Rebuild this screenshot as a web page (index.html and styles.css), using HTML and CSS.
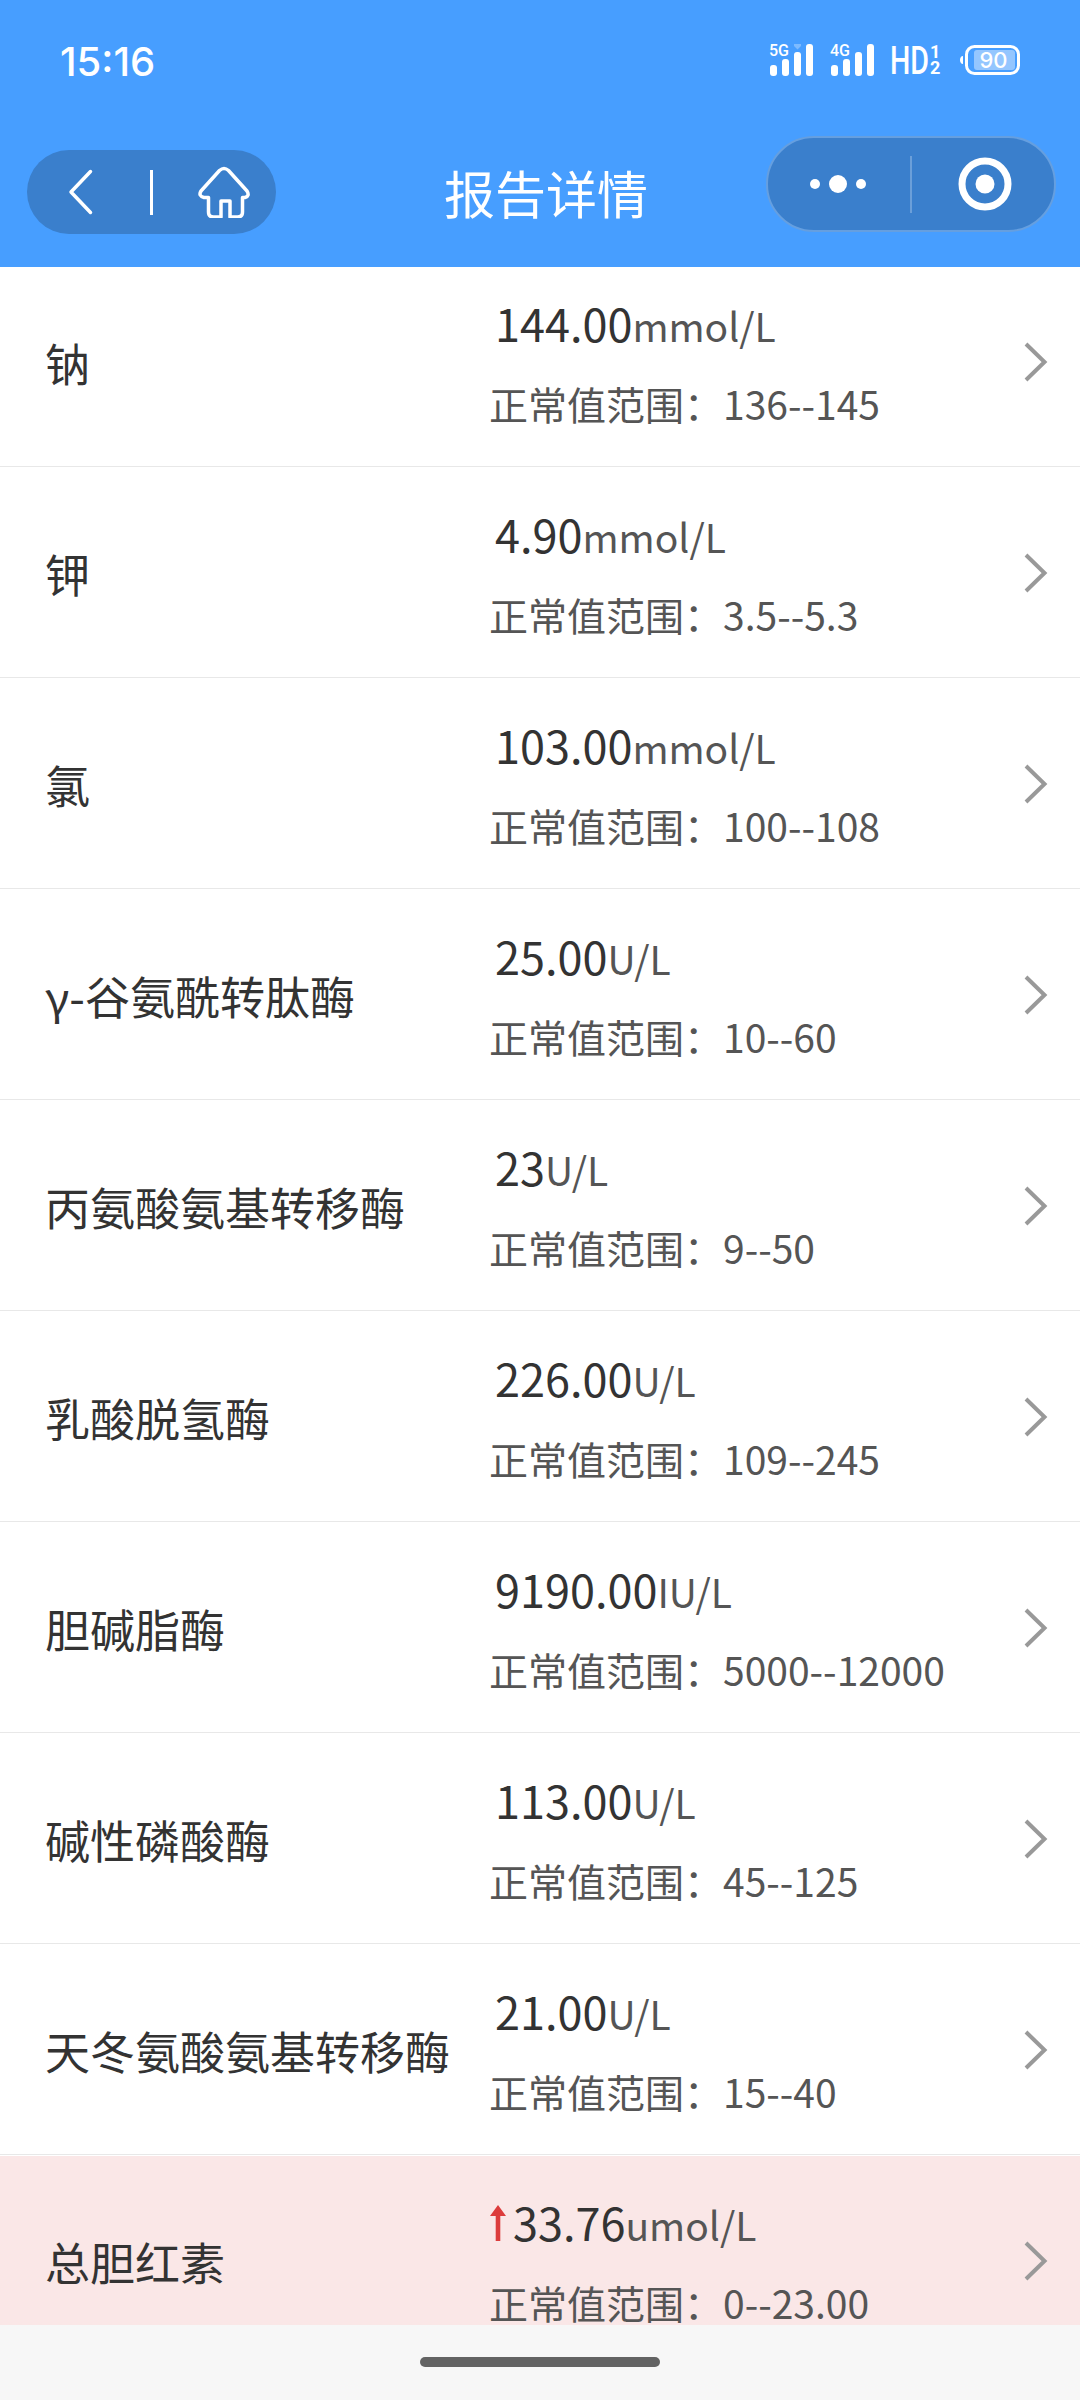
FILE: index.html
```html
<!DOCTYPE html>
<html lang="zh-CN">
<head>
    <meta charset="UTF-8">
    <meta name="viewport" content="width=device-width, initial-scale=1.0">
    <title>报告详情</title>
    <link rel="stylesheet" href="styles.css">
</head>
<body>

    <header class="header">
        <!-- Status bar -->
        <div class="status-bar">
            <span class="time">15:16</span>
            <svg class="status-icons" viewBox="760 36 270 48" fill="#fff">
                <text class="net" x="769" y="56" textLength="20" lengthAdjust="spacingAndGlyphs">5G</text>
                <rect x="770" y="65" width="7" height="11" rx="3"/>
                <rect x="782" y="59" width="7" height="17" rx="3"/>
                <rect x="794" y="52" width="7" height="24" rx="3"/>
                <rect x="806" y="44" width="7" height="32" rx="3"/>
                <path d="M794 44h7v2l-3.5 3.5L794 46z" opacity=".3"/>
                <text class="net" x="830" y="56" textLength="20" lengthAdjust="spacingAndGlyphs">4G</text>
                <rect x="831" y="65" width="7" height="11" rx="3"/>
                <rect x="843" y="59" width="7" height="17" rx="3"/>
                <rect x="855" y="52" width="7" height="24" rx="3"/>
                <rect x="867" y="44" width="7" height="32" rx="3"/>
                <text class="hd" x="890" y="74" textLength="39" lengthAdjust="spacingAndGlyphs">HD</text>
                <text class="sim" x="930" y="58">1</text>
                <text class="sim" x="930" y="74">2</text>
                <path d="M963 56v8c-2 0-3-2-3-4s1-4 3-4z"/>
                <rect x="966.5" y="46.5" width="52" height="27" rx="8" fill="none" stroke="#fff" stroke-width="3"/>
                <rect x="974" y="50" width="41" height="20" rx="3" opacity=".42"/>
                <text class="battery" x="993.5" y="68" text-anchor="middle">90</text>
            </svg>
        </div>

        <!-- Navigation bar -->
        <div class="nav-bar">
            <div class="nav-left">
                <svg class="back" viewBox="0 0 26 48"><path d="M22.5 3.5L3 24l19.5 20.5"/></svg>
                <span class="line"></span>
                <svg class="home" viewBox="0 0 52 52"><path d="M21.5 4.500q4.500-4 9 0L49 25q3 5-2 6.500h-2.500V46q0 5-5 5H32V35h-9v16h-7.500q-5 0-5-5V31.500H6Q0 30 3 25z"/></svg>
            </div>
            <h1>报告详情</h1>
            <div class="capsule">
                <svg class="dots" viewBox="0 0 58 20"><circle cx="6" cy="10" r="5"/><circle cx="29" cy="10" r="9"/><circle cx="52" cy="10" r="5"/></svg>
                <span class="line"></span>
                <svg class="target" viewBox="0 0 54 54"><circle class="ring" cx="27" cy="27" r="23"/><circle cx="27" cy="27" r="9.500"/></svg>
            </div>
        </div>
    </header>

    <!-- Report items -->
    <ul class="list" id="list"></ul>

    <footer class="home-bar"><span></span></footer>

    <script>
        const items = [
            { name: "钠", value: "144.00", unit: "mmol/L", range: "136--145" },
            { name: "钾", value: "4.90", unit: "mmol/L", range: "3.5--5.3" },
            { name: "氯", value: "103.00", unit: "mmol/L", range: "100--108" },
            { name: "γ-谷氨酰转肽酶", value: "25.00", unit: "U/L", range: "10--60" },
            { name: "丙氨酸氨基转移酶", value: "23", unit: "U/L", range: "9--50" },
            { name: "乳酸脱氢酶", value: "226.00", unit: "U/L", range: "109--245" },
            { name: "胆碱脂酶", value: "9190.00", unit: "IU/L", range: "5000--12000" },
            { name: "碱性磷酸酶", value: "113.00", unit: "U/L", range: "45--125" },
            { name: "天冬氨酸氨基转移酶", value: "21.00", unit: "U/L", range: "15--40" },
            { name: "总胆红素", value: "33.76", unit: "umol/L", range: "0--23.00", high: true }
        ];

        const upArrow = '<svg class="up" viewBox="0 0 16 36"><path d="M8 0l8 11h-5.700v25H5.700V11H0z"/></svg>';

        document.getElementById("list").innerHTML = items.map(item => `
            <li class="item${item.high ? " high" : ""}">
                <span class="name">${item.name}</span>
                <div class="detail">
                    <p class="result">${item.high ? upArrow : ""}<span class="value">${item.value}</span><span class="unit">${item.unit}</span></p>
                    <p class="range">正常值范围：${item.range}</p>
                </div>
                <svg class="arrow" viewBox="0 0 24 40"><path d="M2 2l18.500 18L2 38"/></svg>
            </li>`).join("");
    </script>

</body>
</html>
```
FILE: styles.css
```css
* {
    box-sizing: border-box;
    margin: 0;
    padding: 0;
}

body {
    display: flex;
    flex-direction: column;
    width: 1080px;
    height: 2400px;
    overflow: hidden;
    background-color: #fff;
    color: #333;
    font-family: "Noto Sans CJK SC", sans-serif;
}

svg {
    display: block;
    flex-shrink: 0;
}

/* Header */
.header {
    flex: 0 0 267px;
    background-color: #479eff;
    color: #fff;
}

.status-bar {
    display: flex;
    justify-content: space-between;
    align-items: center;
    height: 120px;
    padding: 0 50px 0 60px;
}

.time {
    padding-top: 2px;
    font-family: Inter, sans-serif;
    font-size: 40px;
    font-weight: 500;
}

.status-icons {
    width: 270px;
    height: 48px;
    font-family: Roboto, sans-serif;
}

.net {
    font-size: 17px;
    font-weight: 500;
}

.hd {
    font-size: 39px;
    font-weight: 500;
}

.sim {
    font-size: 18px;
    font-weight: 700;
}

.battery {
    font-family: Inter, sans-serif;
    font-size: 22px;
    font-weight: 500;
}

.nav-bar {
    display: grid;
    grid-template-columns: 249px 1fr 290px;
    align-items: start;
    padding: 16px 24px 0 27px;
}

.nav-left {
    display: flex;
    align-items: center;
    height: 84px;
    margin-top: 14px;
    padding-left: 41px;
    border-radius: 42px;
    background-color: #3a7fcc;
}

.nav-left path {
    fill: none;
    stroke: #fff;
    stroke-width: 3.5;
    stroke-linejoin: round;
    stroke-linecap: round;
}

.back {
    width: 26px;
    height: 48px;
}

.nav-left .line {
    width: 3px;
    height: 45px;
    margin: 0 45px 0 56px;
    background-color: #fff;
}

.home {
    width: 52px;
    height: 52px;
}

h1 {
    margin-top: 19px;
    padding-left: 50px;
    text-align: center;
    font-size: 51px;
    font-weight: 400;
    line-height: 74px;
}

.capsule {
    display: flex;
    align-items: center;
    height: 96px;
    padding-left: 41px;
    border: 2px solid #659fe0;
    border-radius: 48px;
    background-color: #3a7fcc;
    fill: #fff;
}

.dots {
    width: 58px;
    height: 20px;
}

.capsule .line {
    width: 2px;
    height: 57px;
    margin: 0 46px 0 43px;
    background-color: #6b9fd9;
}

.target {
    width: 54px;
    height: 54px;
}

.ring {
    fill: none;
    stroke: #fff;
    stroke-width: 7;
}

/* Report list */
.list {
    flex: 1;
    min-height: 0;
    overflow: hidden;
    list-style: none;
}

.item {
    display: grid;
    grid-template-columns: 444px 1fr 24px;
    align-items: center;
    height: 210px;
    margin-bottom: 1px;
    padding: 0 32px 0 45px;
    border-bottom: 1px solid #e8e8e8;
}

/* First row is partly scrolled under the header */
.item:first-child {
    margin-top: -10px;
}

.high {
    background-color: #fae7e7;
}

.name {
    padding-top: 1px;
    font-size: 45px;
    white-space: nowrap;
}

.detail {
    padding-bottom: 1px;
}

.result {
    display: flex;
    align-items: baseline;
    height: 66px;
    margin-bottom: 17px;
    padding-left: 6px;
    line-height: 66px;
}

.high .result {
    padding-left: 1px;
}

.value {
    font-size: 45px;
}

.unit,
.range {
    color: #555;
    font-size: 39px;
}

.range {
    line-height: 60px;
}

.up {
    width: 16px;
    height: 36px;
    margin-right: 7px;
    fill: #dc3c3c;
}

.arrow {
    width: 24px;
    height: 40px;
    fill: none;
    stroke: #999;
    stroke-width: 4;
}

/* Gesture bar */
.home-bar {
    flex: 0 0 75px;
    padding-top: 32px;
    background-color: #f7f7f7;
}

.home-bar span {
    display: block;
    width: 240px;
    height: 10px;
    margin: 0 auto;
    border-radius: 5px;
    background-color: #636363;
}
```
